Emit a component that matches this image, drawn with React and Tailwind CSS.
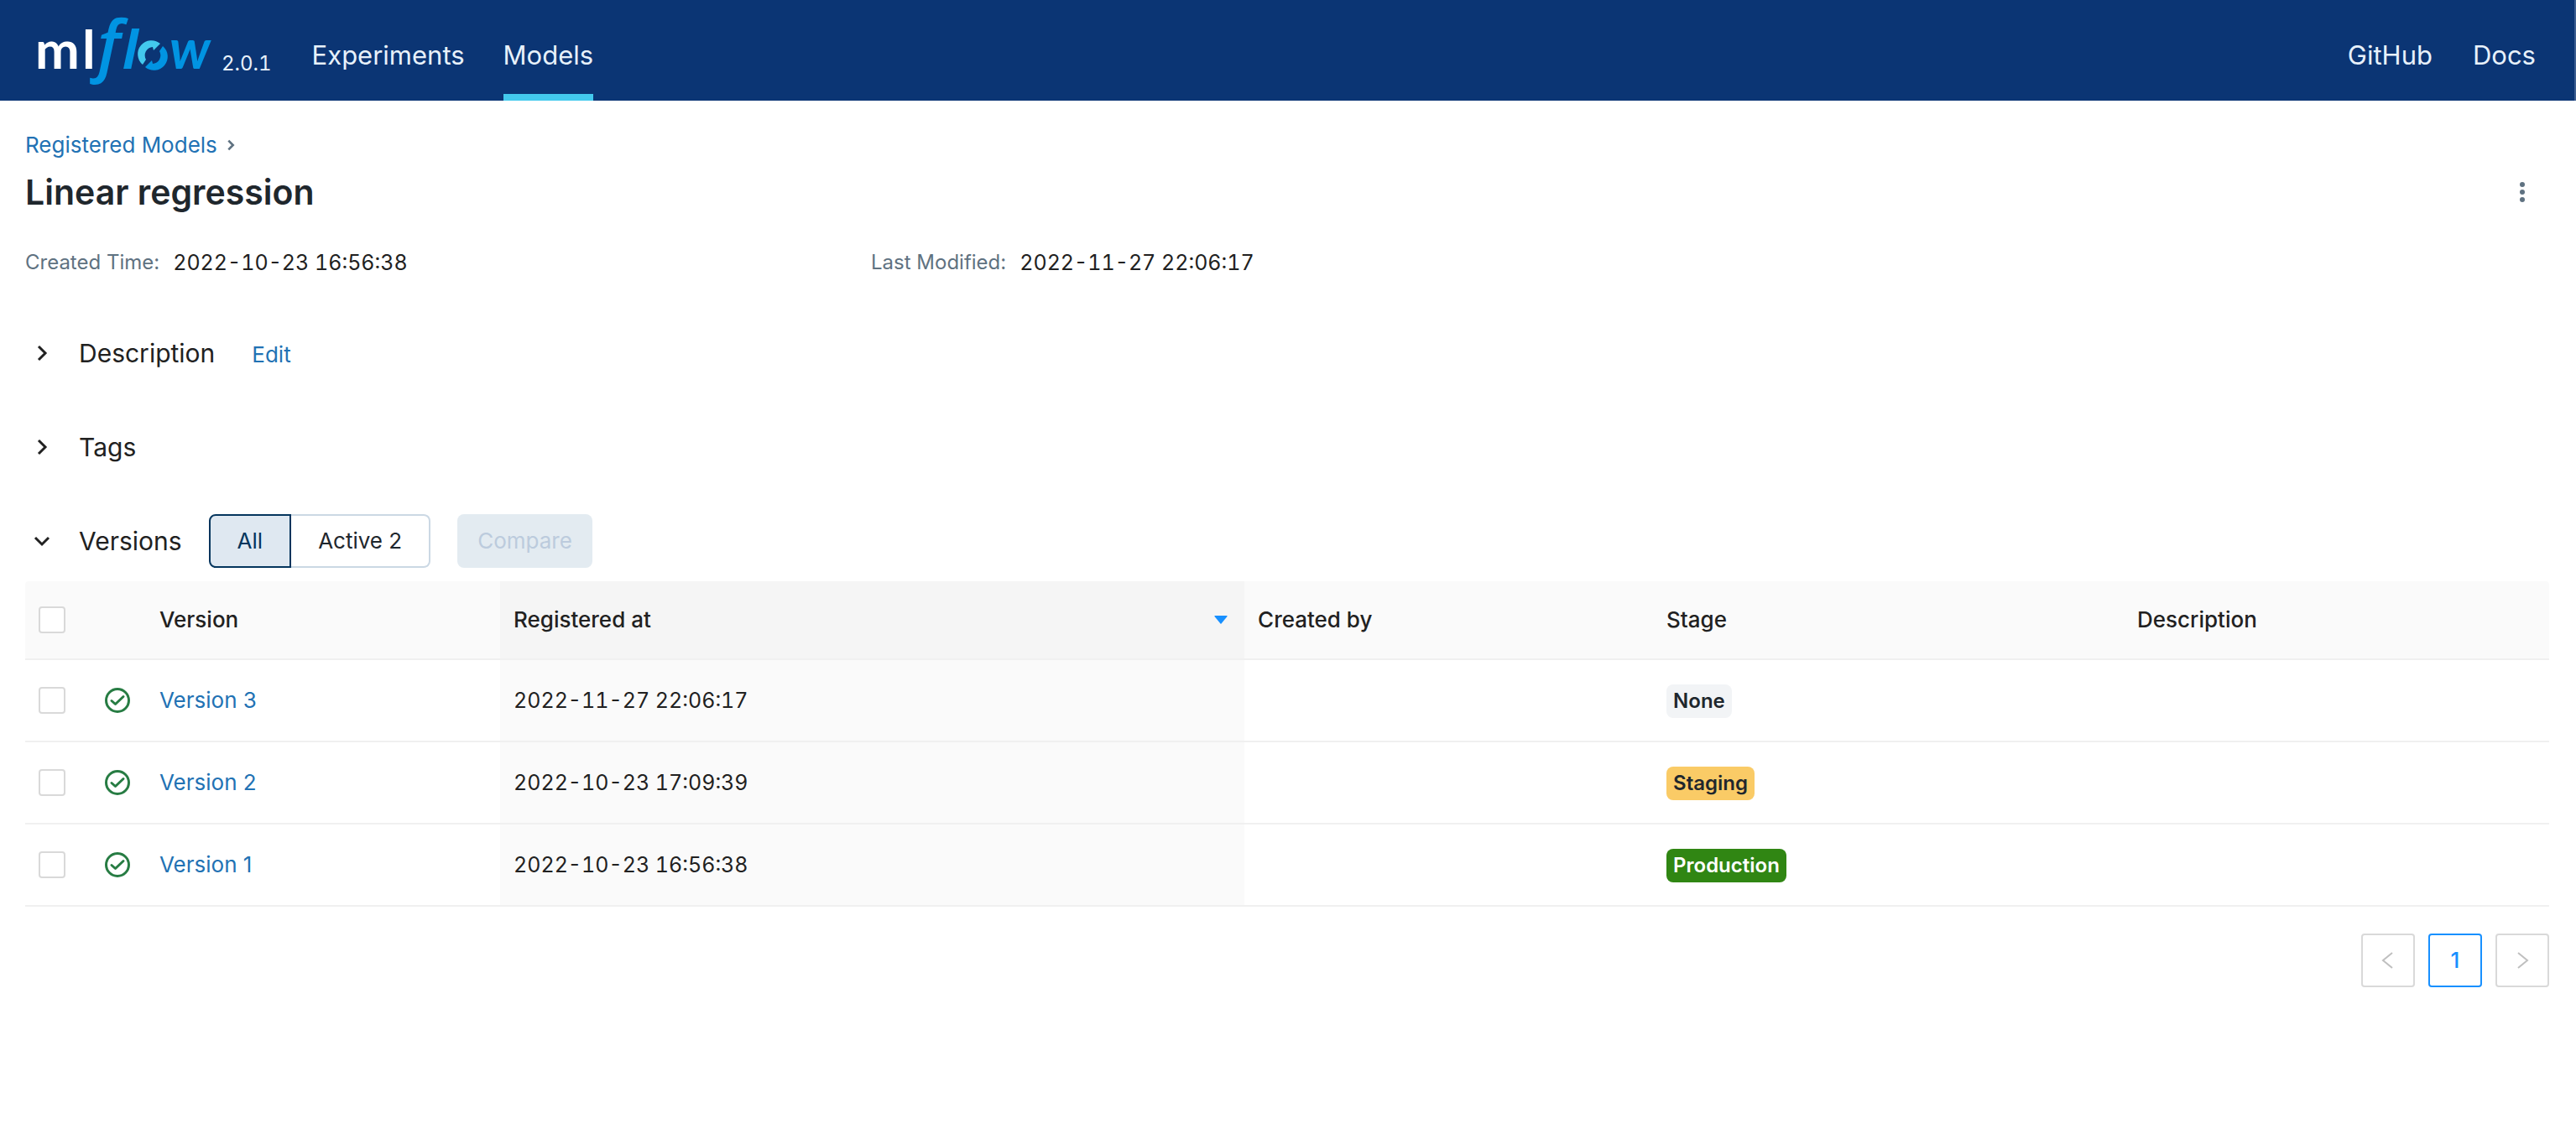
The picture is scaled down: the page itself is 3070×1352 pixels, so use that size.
import React, { useState } from "react";

const versions = [
  { id: 3, registeredAt: "2022-11-27 22:06:17", stage: "None", tone: "bg-[#f2f4f6] text-[#1f272d]" },
  { id: 2, registeredAt: "2022-10-23 17:09:39", stage: "Staging", tone: "bg-[#facb66] text-[#1f272d]" },
  { id: 1, registeredAt: "2022-10-23 16:56:38", stage: "Production", tone: "bg-[#308613] text-white" },
];

function Logo() {
  return (
    <svg role="img" aria-label="mlflow" className="h-[120px] w-[220px] shrink-0 overflow-visible" viewBox="40 0 220 120">
      <g fontFamily="Lato, sans-serif" fontWeight="700">
        <text x="42" y="82" fill="#fff" fontSize="63">m</text>
        <text x="98" y="82" fill="#fff" fontSize="63">l</text>
        <text x="202" y="82" fill="#0194e2" fontStyle="italic" fontSize="66">w</text>
      </g>
      <g fill="#0194e2" fontFamily="Open Sans, sans-serif" fontStyle="italic">
        <text x="116" y="82" fontWeight="600" fontSize="80">f</text>
        <text x="146" y="82" fontWeight="700" fontSize="62">l</text>
      </g>
      <path d="M170 77A16 16 0 0 1 191 52L183 60L182 56A10 10 0 0 0 174 71Z" fill="#43c9ed" />
      <path d="M194 55A16 16 0 0 1 173 80L181 72L182 76A10 10 0 0 0 190 61Z" fill="#0194e2" />
    </svg>
  );
}

const chevrons = {
  right: "M8 4l8 8-8 8",
  down: "M4 8l8 8 8-8",
  prev: "M17 3l-11 9 11 9",
  next: "M7 3l11 9-11 9",
};

function Chevron({ kind, className }) {
  return (
    <svg viewBox="0 0 24 24" fill="none" stroke="currentColor" className={className} aria-hidden="true">
      <path d={chevrons[kind]} />
    </svg>
  );
}

function Check({ label, checked, onChange }) {
  return (
    <input
      type="checkbox"
      aria-label={label}
      checked={checked}
      onChange={onChange}
      className="block size-8 appearance-none rounded border-2 border-[#d9d9d9] bg-white checked:border-[#1890ff] checked:bg-[#1890ff]"
    />
  );
}

function Section({ title, open, children }) {
  return (
    <section className="flex h-16 items-center">
      <button className="flex items-center gap-8 pl-2 text-[30px] leading-10" aria-expanded={open}>
        <Chevron kind={open ? "down" : "right"} className="size-6 stroke-3" />
        <span>{title}</span>
      </button>
      {children}
    </section>
  );
}

export default function App() {
  const [selected, setSelected] = useState([]);
  const toggle = (id) => setSelected((s) => (s.includes(id) ? s.filter((v) => v !== id) : [...s, id]));
  const all = selected.length === versions.length;

  return (
    <div className="min-h-screen bg-white font-[Inter,sans-serif] text-[26px] leading-10 text-[#212121]">
      <header className="flex h-[120px] items-stretch justify-between border-r-2 border-[#3c5d90] bg-[#0b3574] pr-[46px] pl-10 text-[31px] text-[#e7f1fb]">
        <div className="flex">
          <a href="#home" className="flex items-end">
            <Logo />
            <span className="pb-7 pl-1 text-2xl tabular-nums">2.0.1</span>
          </a>
          <nav className="flex gap-[46px] pl-12">
            <a href="#experiments" className="flex items-center border-b-8 border-transparent pt-5">Experiments</a>
            <a href="#models" aria-current="page" className="flex items-center border-b-8 border-[#43c9ed] pt-5">Models</a>
          </nav>
        </div>
        <nav className="flex gap-12">
          <a href="#github" className="flex items-center border-b-8 border-transparent pt-5">GitHub</a>
          <a href="#docs" className="flex items-center border-b-8 border-transparent pt-5">Docs</a>
        </nav>
      </header>

      <main className="pt-[33px] pr-8 pl-[30px]">
        <nav aria-label="Breadcrumb" className="flex items-center gap-2 text-[#2272b4]">
          <a href="#models">Registered Models</a>
          <Chevron kind="right" className="size-4 stroke-[4] text-[#5f7281]" />
        </nav>
        <div className="flex items-center justify-between">
          <h1 className="text-[41px] leading-[72px] font-semibold text-[#1f272d]">Linear regression</h1>
          <button aria-label="More actions" className="flex size-16 items-center justify-center text-[#5f7281]">
            <svg viewBox="0 0 24 24" className="size-6" fill="currentColor" aria-hidden="true">
              <circle cx="12" cy="3" r="3" />
              <circle cx="12" cy="12" r="3" />
              <circle cx="12" cy="21" r="3" />
            </svg>
          </button>
        </div>

        <dl className="mt-7 grid grid-cols-3 gap-x-4">
          <div className="flex items-center gap-4">
            <dt className="text-2xl text-[#5f7281]">Created Time:</dt>
            <dd className="text-[25px] tabular-nums">2022-10-23 16:56:38</dd>
          </div>
          <div className="flex items-center gap-4">
            <dt className="text-2xl text-[#5f7281]">Last Modified:</dt>
            <dd className="text-[25px] tabular-nums">2022-11-27 22:06:17</dd>
          </div>
        </dl>

        <div className="mt-14 flex flex-col gap-12">
          <Section title="Description">
            <button className="pt-1 pl-11 text-[#2272b4]">Edit</button>
          </Section>
          <Section title="Tags" />
          <Section title="Versions" open>
            <div className="flex pl-8" role="group" aria-label="Filter versions">
              <button aria-pressed="true" className="h-16 rounded-l-lg border-2 border-[#04355d] bg-[#dfe8f1] px-8 text-[#04355d]">All</button>
              <button aria-pressed="false" className="h-16 rounded-r-lg border-2 border-l-0 border-[#cbd8e4] px-8 text-[#1f272d]">Active 2</button>
            </div>
            <button disabled className="ml-8 h-16 rounded-lg bg-[#e3ebf1] px-6 text-[#bccbdd]">Compare</button>
          </Section>
        </div>

        <table className="mt-4 w-full table-fixed border-separate border-spacing-0 text-left">
          <colgroup>
            <col className="w-[79px]" />
            <col className="w-[65px]" />
            <col className="w-[14.03%]" />
            <col className="w-[29.49%]" />
            <col className="w-[16.19%]" />
            <col className="w-[18.65%]" />
            <col />
          </colgroup>
          <thead>
            <tr className="h-[94px] bg-[#fafafa] *:border-b-2 *:border-[#f0f0f0] *:px-4 *:font-medium">
              <th className="rounded-tl">
                <Check label="Select all versions" checked={all} onChange={() => setSelected(all ? [] : versions.map((v) => v.id))} />
              </th>
              <th aria-label="Status" />
              <th>Version</th>
              <th className="bg-[#f5f5f5]" aria-sort="descending">
                <button className="flex w-full items-center justify-between pr-1 font-medium">
                  Registered at
                  <svg viewBox="0 0 16 10" className="h-[10px] w-4" fill="#1890ff" aria-hidden="true">
                    <path d="M1 0h14q1 0 .5 1L8.500 9.500q-.5 .5-1 0L.5 1Q0 0 1 0z" />
                  </svg>
                </button>
              </th>
              <th>Created by</th>
              <th>Stage</th>
              <th className="rounded-tr">Description</th>
            </tr>
          </thead>
          <tbody>
            {versions.map((v) => (
              <tr key={v.id} className="h-[98px] *:border-b-2 *:border-[#f0f0f0] *:px-4">
                <td>
                  <Check label={`Select version ${v.id}`} checked={selected.includes(v.id)} onChange={() => toggle(v.id)} />
                </td>
                <td>
                  <svg viewBox="0 0 30 30" className="size-[30px]" fill="none" stroke="#277c43" role="img" aria-label="Ready">
                    <circle cx="15" cy="15" r="13.500" strokeWidth="3" />
                    <path d="M8 15.500l4.500 4 9.500-9" strokeWidth="3" strokeLinecap="round" strokeLinejoin="round" />
                  </svg>
                </td>
                <td>
                  <a href={`#version-${v.id}`} className="text-[#2272b4]">Version {v.id}</a>
                </td>
                <td className="bg-[#fafafa] text-[25px] tabular-nums">{v.registeredAt}</td>
                <td />
                <td>
                  <span className={`inline-block rounded-lg px-2 align-middle text-2xl leading-10 font-semibold ${v.tone}`}>{v.stage}</span>
                </td>
                <td />
              </tr>
            ))}
          </tbody>
        </table>

        <nav aria-label="Pagination" className="mt-8 flex justify-end gap-4">
          <button disabled aria-label="Previous page" className="flex size-16 items-center justify-center rounded border-2 border-[#d9d9d9] text-[#bfbfbf]">
            <Chevron kind="prev" className="size-6 stroke-2" />
          </button>
          <button aria-current="page" className="size-16 rounded border-2 border-[#1890ff] font-medium text-[#1890ff]">1</button>
          <button disabled aria-label="Next page" className="flex size-16 items-center justify-center rounded border-2 border-[#d9d9d9] text-[#bfbfbf]">
            <Chevron kind="next" className="size-6 stroke-2" />
          </button>
        </nav>
      </main>
    </div>
  );
}
